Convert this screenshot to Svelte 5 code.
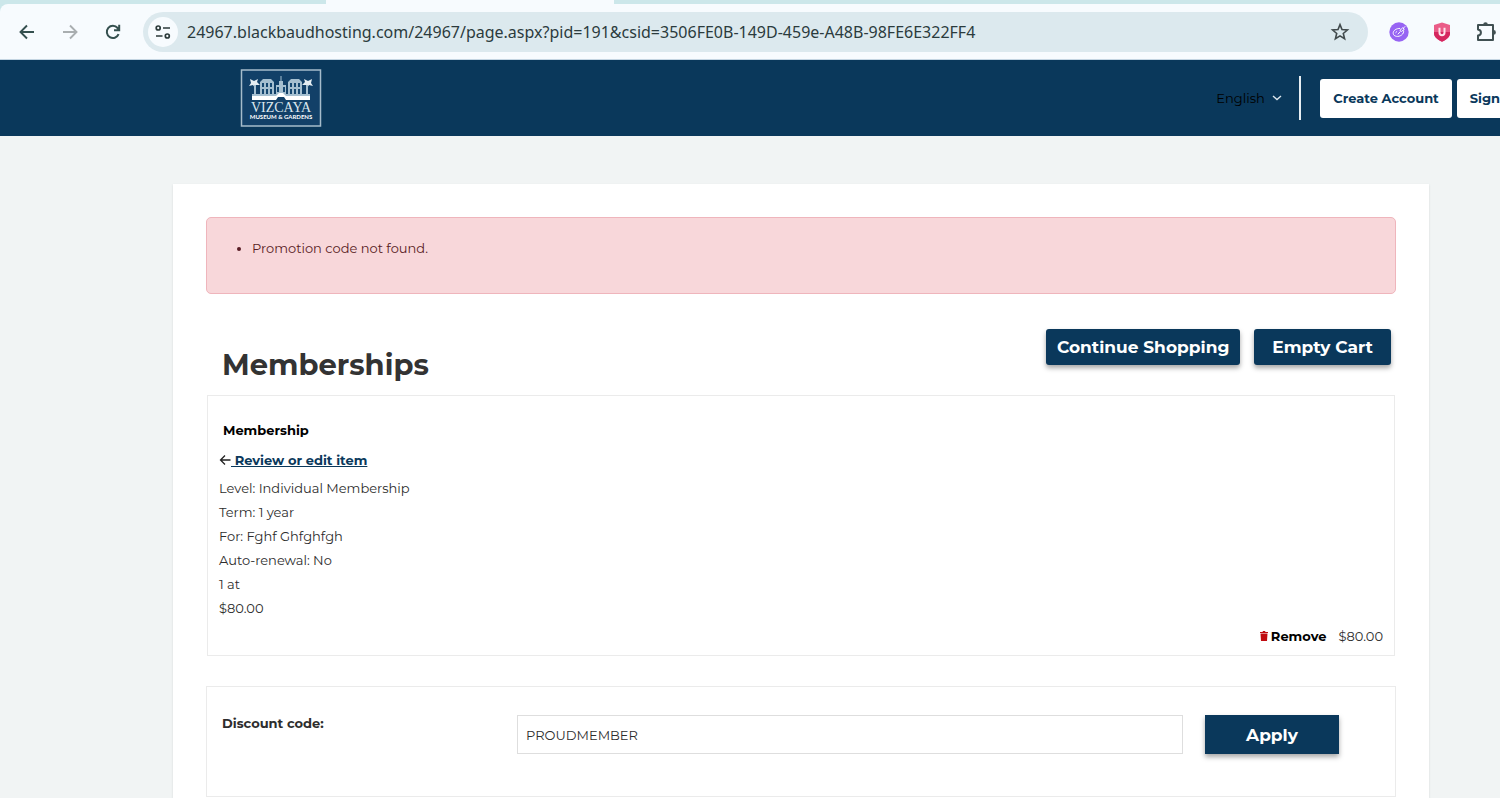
<script lang="ts">
  const details = [
    "Level: Individual Membership",
    "Term: 1 year",
    "For: Fghf Ghfghfgh",
    "Auto-renewal: No",
    "1 at",
    "$80.00",
  ];

  let url = $state("24967.blackbaudhosting.com/24967/page.aspx?pid=191&csid=3506FE0B-149D-459e-A48B-98FE6E322FF4");
  let code = $state("PROUDMEMBER");
  let errors = $state(["Promotion code not found."]);
</script>

<div class="window">
  <div class="chrome">
    <div class="tabstrip">
      <span class="tab"></span>
    </div>

    <div class="toolbar">
      <button class="nav" aria-label="Back">
        <svg width="16" height="16" viewBox="0 0 16 16" fill="none" stroke="#35504f" stroke-width="1.9">
          <path d="M15 8H2M8 1.5 1.5 8 8 14.5" />
        </svg>
      </button>
      <button class="nav" aria-label="Forward">
        <svg width="16" height="16" viewBox="0 0 16 16" fill="none" stroke="#a9aeb0" stroke-width="1.9">
          <path d="M1 8h13M8 1.5 14.5 8 8 14.5" />
        </svg>
      </button>
      <button class="nav" aria-label="Reload">
        <svg width="16" height="16" viewBox="0 0 16 16" fill="none" stroke="#35504f" stroke-width="2">
          <path d="M13.6 10.2A6.1 6.1 0 1 1 12.6 4L14 5.6M14.2 .8v5.4H9" />
        </svg>
      </button>

      <div class="address">
        <button class="site" aria-label="View site information">
          <svg width="16" height="14" viewBox="0 0 16 14" fill="none" stroke="#2b3a3a" stroke-width="1.7">
            <circle cx="3.2" cy="3" r="2" />
            <path d="M8 3h7M1 11h6.5" />
            <circle cx="12.3" cy="11" r="2" />
          </svg>
        </button>
        <input class="url" aria-label="Address" spellcheck="false" bind:value={url} />
        <button class="star" aria-label="Bookmark this tab">
          <svg width="20" height="20" viewBox="0 0 20 20" fill="none" stroke="#414a4c" stroke-width="1.6">
            <path d="m10 2.6 2 5 5.4.4-4.1 3.5 1.3 5.3L10 13.9l-4.6 2.9 1.3-5.3L2.6 8 8 7.6z" />
          </svg>
        </button>
      </div>

      <div class="extensions">
        <button aria-label="Rewards extension">
          <svg width="20" height="20" viewBox="0 0 20 20" fill="none" stroke="#fff">
            <circle cx="10" cy="10" r="9.7" fill="#9764f3" stroke="none" />
            <path d="M11.2 6.4C7.4 6.300 3.900 8.600 4.200 11.400c.3 3.400 5.500 3.900 8.400 1.600 1.600-1.300 2.300-2.800 2-4.500M6.500 10.800l1.600-1.500M8.800 12.300l2.300-2.500M10.800 8.500l2.900-2.700 1.600 1.500-2.900 2.200zM14.500 6l1.700-1.700" />
          </svg>
        </button>
        <button aria-label="Shield extension">
          <svg width="18" height="20" viewBox="0 0 18 20">
            <path d="M9 .5 17 3v8.2c0 4-4 6.800-8 8.500-4-1.700-8-4.500-8-8.500V3z" fill="#ea5c88" />
            <path d="M1 10h16v1.200c0 4-4 6.800-8 8.500-4-1.700-8-4.500-8-8.500z" fill="#d5275f" />
            <path d="M6.500 5.700v5a2.500 2.500 0 0 0 5 0v-5" fill="none" stroke="#fde4ec" stroke-width="2" />
          </svg>
        </button>
        <button aria-label="Extensions">
          <svg width="22" height="22" viewBox="0 0 22 22" fill="none" stroke="#405052" stroke-width="2" stroke-linejoin="round">
            <path d="M3 4h15v15H3v-4.400c3.900-.4 3.900-5.800 0-6.200z" />
            <path d="M8.200 3.500a2.300 2.300 0 0 1 4.600 0zM18.500 9a2.400 2.400 0 0 1 0 4.800z" fill="#405052" stroke="none" />
          </svg>
        </button>
      </div>
    </div>
  </div>

  <header>
    <a class="logo" href="#home" aria-label="Vizcaya Museum &amp; Gardens">
      <svg width="82" height="58" viewBox="0 0 82 58">
        <rect x="1.500" y="1" width="79" height="56" fill="#124068" stroke="#a6bccb" stroke-width="1.500" />
        <g fill="#a5bfd0">
          <path d="M12 25h58v3H12zM20 13l3-3h8l3 3v13H20zM48 13l3-3h8l3 3v13H48zM36 16h10v10H36z" />
          <path d="M39 12h4v5h-4zM40.500 7h1v6h-1z" />
          <path d="m10 10 4 2 4-2-1 3 3 3-4 0-1 3-2-3-4 1 2-3zM72 10l-4 2-4-2 1 3-3 3h4l1 3 2-3 4 1-2-3z" fill="#e5edf2" />
          <path d="M14 16h2v11h-2zM66 16h2v11h-2z" />
        </g>
        <path d="M12 27h24l3-3h4l3 3h24v4H46l-2-3h-6l-2 3H12z" fill="#fff" />
        <g fill="#164871">
          <path d="M22 14h2v4h-2zM26 14h2v4h-2zM30 14h2v4h-2zM50 14h2v4h-2zM54 14h2v4h-2zM58 14h2v4h-2zM22 20h2v5h-2zM26 20h2v5h-2zM30 20h2v5h-2zM50 20h2v5h-2zM54 20h2v5h-2zM58 20h2v5h-2zM37 18h2v5h-2zM43 18h2v5h-2z" />
        </g>
        <text x="41" y="43" text-anchor="middle" class="logo-name">VIZCAYA</text>
        <text x="41" y="50" text-anchor="middle" class="logo-sub">MUSEUM &amp; GARDENS</text>
      </svg>
    </a>

    <div class="account">
      <label class="language">
        <select aria-label="Language">
          <option>English</option>
        </select>
        <svg width="10" height="6" viewBox="0 0 10 6" fill="none" stroke="#dce6ed" stroke-width="1.400">
          <path d="m1 1 4 3.500L9 1" />
        </svg>
      </label>
      <span class="divider"></span>
      <button>Create Account</button>
      <button>Sign In</button>
    </div>
  </header>

  <main>
    {#if errors.length > 0}
      <ul class="alert" role="alert">
        {#each errors as error}
          <li>{error}</li>
        {/each}
      </ul>
    {/if}

    <div class="title-row">
      <h1>Memberships</h1>
      <div class="actions">
        <button class="primary">Continue Shopping</button>
        <button class="primary">Empty Cart</button>
      </div>
    </div>

    <section class="item">
      <h2>Membership</h2>
      <p class="review">
        <svg width="12" height="12" viewBox="0 0 12 12" fill="none" stroke="#222" stroke-width="1.300">
          <path d="M11.500 6H1.500M6 1.500 1.500 6 6 10.500" />
        </svg><a href="#review">&nbsp;Review or edit item</a>
      </p>
      {#each details as line}
        <p class="detail">{line}</p>
      {/each}
      <div class="total">
        <button class="remove">
          <svg width="8" height="10" viewBox="0 0 8 10" fill="#c00d12">
            <path d="M0 1h2.500l.5-1h2l.5 1H8v1H0zM.5 2.500h7L7 10H1z" />
          </svg>
          Remove
        </button>
        <span>$80.00</span>
      </div>
    </section>

    <form class="discount" onsubmit={(e) => e.preventDefault()}>
      <label for="code">Discount code:</label>
      <input id="code" type="text" bind:value={code} />
      <button class="primary apply">Apply</button>
    </form>
  </main>
</div>

<style>
  :global(body) {
    background: #f1f4f4;
  }

  .window {
    display: flex;
    flex-direction: column;
    height: 100vh;
    overflow: hidden;
    background: #f1f4f4;
    color: #2d2d2d;
    font-family: Montserrat, Inter, sans-serif;
    font-size: 13px;
  }

  button,
  input,
  select {
    margin: 0;
    padding: 0;
    border: 0;
    background: none;
    color: inherit;
    font: inherit;
    box-sizing: border-box;
  }

  button { cursor: pointer; }
  svg { display: block; }

  .chrome {
    flex: none;
    background: #cce7ea;
  }

  .tabstrip {
    height: 4px;
    padding-left: 326px;
  }

  .tab {
    display: block;
    width: 288px;
    height: 4px;
    background: #f7fbfe;
  }

  .toolbar {
    display: flex;
    align-items: center;
    height: 56px;
    box-sizing: border-box;
    padding-left: 5px;
    border-bottom: 1px solid #c4d5e2;
    border-radius: 8px 0 0 0;
    background: #f7fbfe;
  }

  .nav {
    display: grid;
    place-items: center;
    width: 43px;
    height: 40px;
  }

  .address {
    display: flex;
    flex: 1;
    align-items: center;
    height: 40px;
    margin-left: 9px;
    padding: 0 18px 0 5px;
    border-radius: 20px;
    background: #dce9ee;
  }

  .site {
    display: grid;
    place-items: center;
    width: 30px;
    height: 30px;
    border-radius: 50%;
    background: #f7fbfe;
  }

  .url {
    flex: 1;
    margin-left: 9px;
    outline: none;
    color: #2b3b3d;
    font-family: "Noto Sans", "Open Sans", sans-serif;
    font-size: 16px;
  }

  .extensions {
    display: flex;
    align-items: center;
    gap: 24px;
    margin-left: 21px;
    margin-right: 3px;
  }

  header {
    display: flex;
    flex: none;
    align-items: center;
    justify-content: space-between;
    height: 76px;
    padding-left: 240px;
    background: #0a385b;
  }

  .logo-name {
    fill: #dce7ee;
    font-family: "Liberation Serif", serif;
    font-size: 14px;
  }

  .logo-sub {
    fill: #fff;
    font-family: Lato, sans-serif;
    font-size: 6px;
    font-weight: 700;
  }

  .account {
    display: flex;
    align-items: center;
    margin-right: -30px;
  }

  .language {
    display: flex;
    align-items: center;
    gap: 7px;
    color: #000;
  }

  .language select { appearance: none; }

  .divider {
    width: 2px;
    height: 44px;
    margin: 0 19px 0 17px;
    background: #e6edf2;
  }

  .account button {
    height: 39px;
    padding: 0 13px;
    border-radius: 3px;
    background: #fff;
    color: #0a385b;
    font-weight: 700;
    white-space: nowrap;
  }

  .account button + button { margin-left: 5px; }

  main {
    flex: 1 0 auto;
    margin: 48px 71px 0 173px;
    padding: 33px 33px 0;
    background: #fff;
    box-shadow: 0 1px 2px #d5d9d9;
  }

  .alert {
    height: 77px;
    box-sizing: border-box;
    margin: 0;
    padding: 20px 45px;
    border: 1px solid #efb5bc;
    border-radius: 5px;
    background: #f8d7da;
    color: #581c24;
    line-height: 20px;
  }

  .title-row {
    display: flex;
    justify-content: space-between;
    padding: 35px 5px 0 16px;
  }

  h1 {
    margin: 16px 0 10px;
    color: #333;
    font-size: 29px;
    line-height: 40px;
  }

  .actions {
    display: flex;
    gap: 14px;
    align-items: flex-start;
  }

  .primary {
    height: 36px;
    padding: 0 11px;
    border-radius: 3px;
    background: #0a385b;
    box-shadow: 0 3px 5px rgba(0, 0, 0, 0.35);
    color: #fff;
    font-size: 17px;
    font-weight: 700;
  }

  .actions .primary + .primary { padding: 0 18px; }

  .item {
    margin: 0 1px;
    padding: 24px 11px 7px;
    border: 1px solid #ebebeb;
  }

  h2 {
    margin: 0 4px 10px;
    color: #000;
    font-size: 13px;
    line-height: 20px;
  }

  .review {
    display: flex;
    align-items: center;
    margin: 0 0 6px;
    line-height: 20px;
  }

  .review a {
    color: #0a385b;
    font-weight: 700;
  }

  .detail {
    margin: 0;
    line-height: 24px;
  }

  .total {
    display: flex;
    justify-content: flex-end;
    gap: 12px;
    margin-top: 4px;
    line-height: 24px;
  }

  .remove {
    display: flex;
    align-items: center;
    gap: 3px;
    color: #000;
    font-weight: 700;
  }

  .discount {
    display: flex;
    height: 111px;
    box-sizing: border-box;
    margin-top: 30px;
    padding: 28px 56px 0 15px;
    border: 1px solid #ebebeb;
  }

  .discount label {
    width: 295px;
    font-weight: 700;
    line-height: 16px;
  }

  .discount input {
    flex: 1;
    height: 39px;
    padding: 0 8px;
    border: 1px solid #dedede;
  }

  .apply {
    width: 134px;
    height: 39px;
    margin-left: 22px;
    border-radius: 0;
  }
</style>
